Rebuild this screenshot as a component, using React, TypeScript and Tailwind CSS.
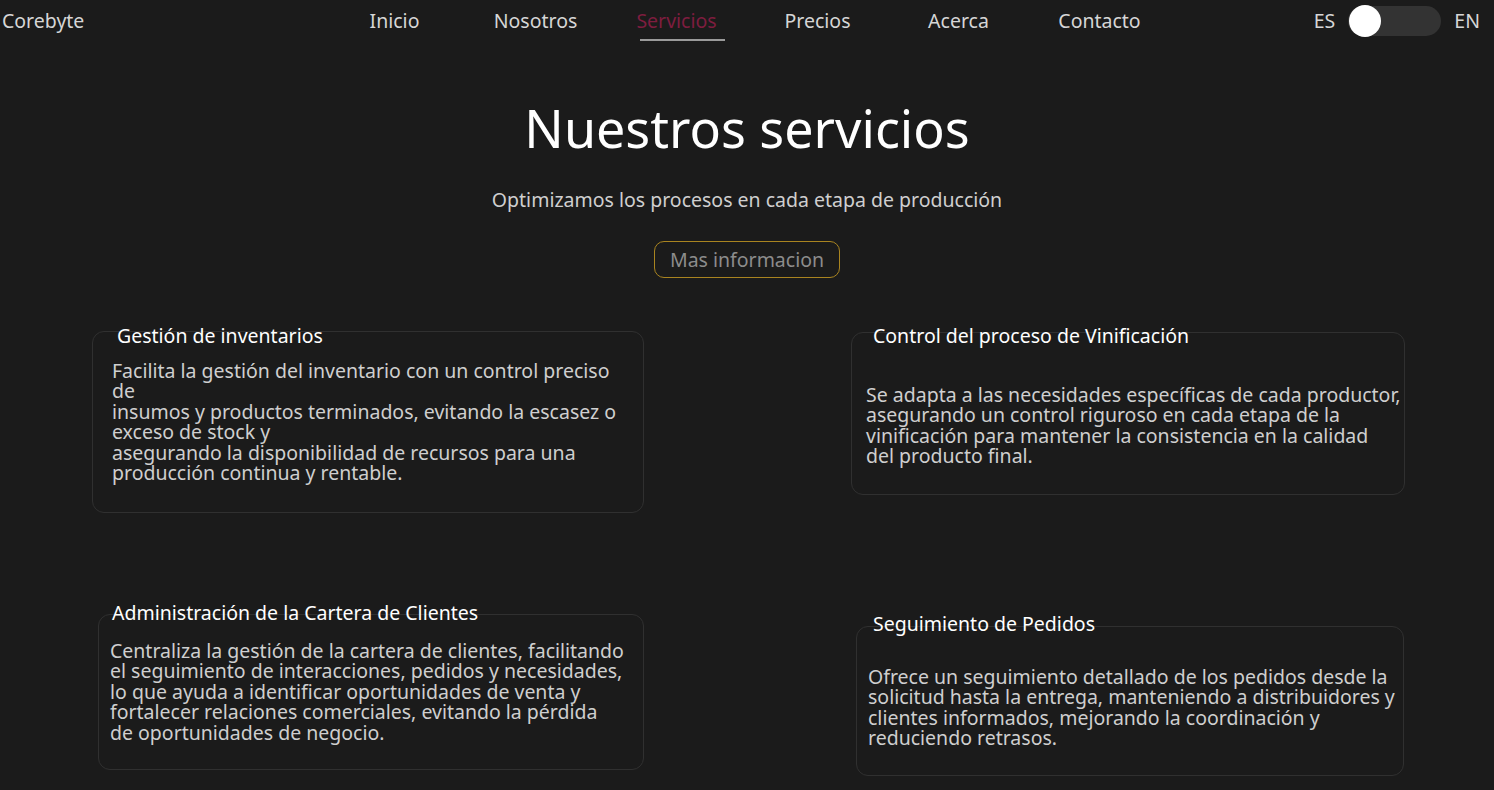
import React from "react";

const font = { fontFamily: '"Noto Sans", "Open Sans", sans-serif' };

type CardProps = {
  title: string;
  lines: string[];
  cls: string;
  titleCls: string;
  bodyCls: string;
};

function Card({ title, lines, cls, titleCls, bodyCls }: CardProps) {
  return (
    <div className={`relative rounded-xl border border-[#303030] ${cls}`}>
      <div className={`absolute text-[19.5px] leading-[24px] text-white whitespace-nowrap ${titleCls}`}>{title}</div>
      <div className={`text-[19.5px] leading-[20.4px] text-[#cfcfcf] ${bodyCls}`}>
        {lines.map((l, i) => (
          <div key={i} className="whitespace-nowrap">{l}</div>
        ))}
      </div>
    </div>
  );
}

export default function App() {
  const nav = ["Inicio", "Nosotros", "Servicios", "Precios", "Acerca", "Contacto"];
  return (
    <div className="min-h-screen w-full bg-[#1b1b1b] overflow-hidden" style={font}>
      <header className="grid h-[42px] grid-cols-[1fr_auto_1fr] items-center">
        <div className="pl-[2px] text-[19.5px] text-[#d6d6d6]">Corebyte</div>
        <nav className="flex">
          {nav.map((n) => (
            <div key={n} className="w-[141px] text-center text-[19.5px]">
              {n === "Servicios" ? (
                <span className="relative inline-block text-[#7e1d3f]">
                  {n}
                  <span className="absolute left-[4px] right-[-8px] bottom-[-5px] h-[2px] bg-[#9a9a9a]" />
                </span>
              ) : (
                <span className="text-[#d6d6d6]">{n}</span>
              )}
            </div>
          ))}
        </nav>
        <div className="flex items-center justify-end pr-[14px]">
          <span className="text-[19.5px] text-[#d6d6d6]">ES</span>
          <div className="relative ml-[13px] mr-[13px] h-[30px] w-[93px] rounded-full bg-[#333333]">
            <div className="absolute left-[1px] top-[-1px] h-[32px] w-[32px] rounded-full bg-white" />
          </div>
          <span className="text-[19.5px] text-[#d6d6d6]">EN</span>
        </div>
      </header>

      <section className="flex flex-col items-center">
        <h1 className="mt-[54px] text-[52px] leading-[63px] text-white">Nuestros servicios</h1>
        <p className="mt-[29px] text-[19.5px] leading-[24px] text-[#cfcfcf]">
          Optimizamos los procesos en cada etapa de producción
        </p>
        <button className="mt-[29px] h-[37px] rounded-[10px] border border-[#a98420] px-[15px] text-[19.5px] leading-[24px] text-[#8c8c8c]">
          Mas informacion
        </button>
      </section>

      <section className="mt-[53px] grid grid-cols-[552px_554px] items-start gap-x-[207px] gap-y-[101px] pl-[92px]">
        <Card
          title="Gestión de inventarios"
          cls="h-[182px] w-[552px]"
          titleCls="left-[24px] top-[-8px]"
          bodyCls="pl-[19px] pt-[29px]"
          lines={[
            "Facilita la gestión del inventario con un control preciso",
            "de",
            "insumos y productos terminados, evitando la escasez o",
            "exceso de stock y",
            "asegurando la disponibilidad de recursos para una",
            "producción continua y rentable.",
          ]}
        />
        <Card
          title="Control del proceso de Vinificación"
          cls="mt-[1px] h-[163px] w-[554px]"
          titleCls="left-[21px] top-[-9px]"
          bodyCls="pl-[14px] pt-[52px]"
          lines={[
            "Se adapta a las necesidades específicas de cada productor,",
            "asegurando un control riguroso en cada etapa de la",
            "vinificación para mantener la consistencia en la calidad",
            "del producto final.",
          ]}
        />
        <Card
          title="Administración de la Cartera de Clientes"
          cls="ml-[6px] h-[156px] w-[546px]"
          titleCls="left-[13px] top-[-14px]"
          bodyCls="pl-[11px] pt-[26px]"
          lines={[
            "Centraliza la gestión de la cartera de clientes, facilitando",
            "el seguimiento de interacciones, pedidos y necesidades,",
            "lo que ayuda a identificar oportunidades de venta y",
            "fortalecer relaciones comerciales, evitando la pérdida",
            "de oportunidades de negocio.",
          ]}
        />
        <Card
          title="Seguimiento de Pedidos"
          cls="ml-[5px] mt-[12px] h-[150px] w-[548px]"
          titleCls="left-[16px] top-[-15px]"
          bodyCls="pl-[11px] pt-[40px]"
          lines={[
            "Ofrece un seguimiento detallado de los pedidos desde la",
            "solicitud hasta la entrega, manteniendo a distribuidores y",
            "clientes informados, mejorando la coordinación y",
            "reduciendo retrasos.",
          ]}
        />
      </section>
    </div>
  );
}
